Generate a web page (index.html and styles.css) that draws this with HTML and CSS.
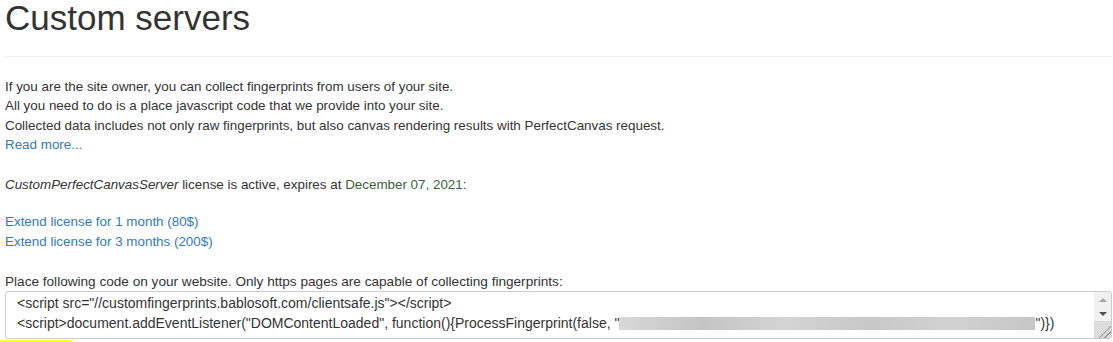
FILE: index.html
```html
<!DOCTYPE html>
<html lang="en">
<head>
    <meta charset="UTF-8">
    <title>Custom servers</title>
    <link rel="stylesheet" href="styles.css">
</head>
<body>
    <div class="container">
        <div class="page-header">
            <h1>Custom servers</h1>
        </div>
        <p class="intro">
            If you are the site owner, you can collect fingerprints from users of your site.<br>
            All you need to do is a place javascript code that we provide into your site.<br>
            Collected data includes not only raw fingerprints, but also canvas rendering results with PerfectCanvas request.<br>
            <a href="#">Read more...</a>
        </p>
        <p class="status"><em>CustomPerfectCanvasServer</em> license is active, expires at <span class="date">December 07, 2021</span>:</p>
        <p class="extend">
            <a href="#">Extend license for 1 month (80$)</a><br>
            <a href="#">Extend license for 3 months (200$)</a>
        </p>
        <label class="code-label">Place following code on your website. Only https pages are capable of collecting fingerprints:</label>
        <div class="code-box">
            <div class="code-text">
                <div>&lt;script src="//customfingerprints.bablosoft.com/clientsafe.js"&gt;&lt;/script&gt;</div>
                <div>&lt;script&gt;document.addEventListener("DOMContentLoaded", function(){ProcessFingerprint(false, "<span class="blurred"></span>")})</div>
            </div>
            <div class="scrollbar">
                <span class="arrow up"></span>
                <span class="arrow down"></span>
                <span class="track"></span>
                <span class="corner"></span>
            </div>
        </div>
        <div class="marker"></div>
    </div>
</body>
</html>
```

FILE: styles.css
```css
body {
    margin: 0;
    font-family: "Liberation Sans", Arial, sans-serif;
    font-size: 13.4px;
    line-height: 19.6px;
    color: #333;
    background: #fff;
}
.container {
    padding: 0 1px 0 5px;
}
.page-header {
    border-bottom: 1px solid #eee;
    padding-bottom: 18px;
}
h1 {
    margin: -1px 0 0;
    font-size: 35px;
    font-weight: 500;
    line-height: 1.1;
    color: #333;
}
p {
    margin: 0;
}
a {
    color: #337ab7;
    text-decoration: none;
}
.intro {
    margin-top: 20px;
}
.status {
    margin-top: 20px;
}
.date {
    color: #3c5e3c;
}
.extend {
    margin-top: 18px;
}
.code-label {
    display: block;
    margin-top: 20px;
    font-size: 13.6px;
}
.code-box {
    display: flex;
    margin-top: 0;
    height: 46px;
    border: 1px solid #ccc;
    border-radius: 3px;
    overflow: hidden;
}
.code-text {
    flex: 1;
    padding: 2px 11px;
    font-size: 14px;
    white-space: nowrap;
    overflow: hidden;
}
.blurred {
    display: inline-block;
    width: 416px;
    height: 13px;
    vertical-align: -2px;
    background: linear-gradient(90deg, #d8d8d8, #c4c4c4 20%, #d4d4d4 40%, #c8c8c8 60%, #d2d2d2 80%, #c6c6c6);
}
.scrollbar {
    width: 17px;
    display: flex;
    flex-direction: column;
    align-items: center;
    background: #f1f1f1;
}
.arrow {
    width: 0;
    height: 0;
    border-left: 4px solid transparent;
    border-right: 4px solid transparent;
}
.up {
    margin-top: 6px;
    border-bottom: 4px solid #a3a3a3;
}
.down {
    margin-top: 10px;
    border-top: 4px solid #505050;
}
.track {
    flex: 1;
}
.corner {
    width: 17px;
    height: 17px;
    background: #dcdcdc linear-gradient(135deg, transparent 62%, #999 63%, #999 67%, transparent 68%, transparent 78%, #999 79%, #999 83%, transparent 84%);
}
.marker {
    margin-left: -5px;
    width: 72px;
    height: 4px;
    margin-top: 1px;
    background: #ffff33;
}
```
